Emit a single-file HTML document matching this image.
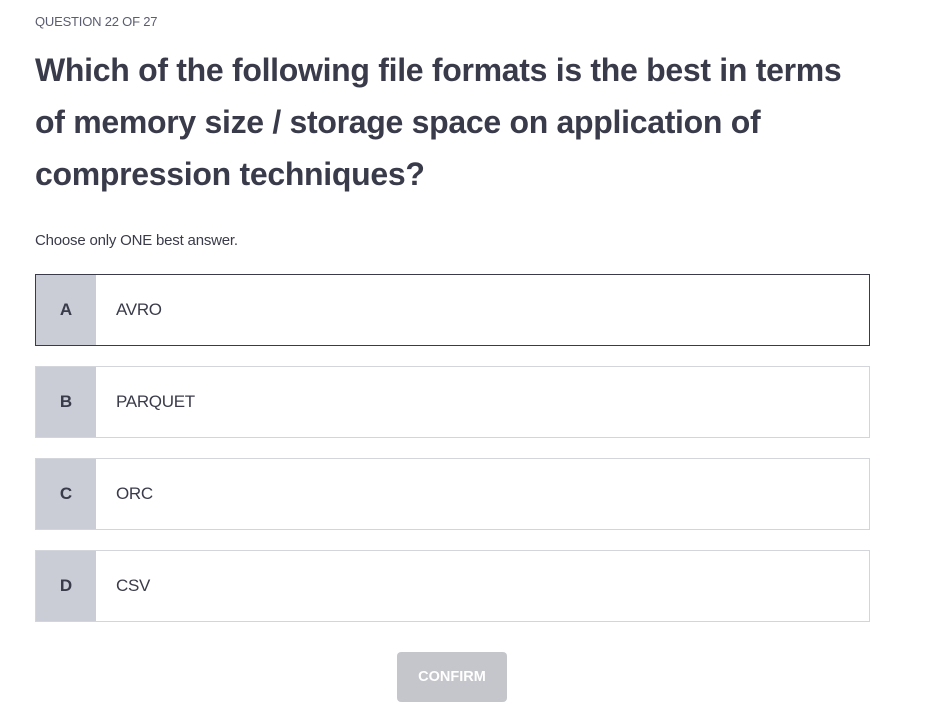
<!DOCTYPE html>
<html><head><style>
body{margin:0;background:#fff;font-family:"Liberation Sans",sans-serif;color:#3a3b4a;width:925px;height:717px;overflow:hidden;position:relative}
.q{position:absolute;left:35px;top:14px;font-size:13px;color:#5a5d70;letter-spacing:-0.2px}
h1{position:absolute;left:35px;top:44px;margin:0;width:880px;white-space:nowrap;font-size:32px;font-weight:bold;line-height:52px;color:#3a3b4a;letter-spacing:-0.3px}
.c{position:absolute;left:35px;top:232px;font-size:15px;color:#3a3b4a;letter-spacing:-0.2px}
.o{position:absolute;left:35px;width:833px;height:70px;border:1px solid #d3d5dc;display:flex;align-items:center;box-sizing:content-box}
.o .l{width:60px;height:100%;background:#cacdd6;display:flex;align-items:center;justify-content:center;font-weight:bold;font-size:17px;color:#3a3b4a}
.o .t{margin-left:20px;font-size:17px;color:#3a3b4a;letter-spacing:-0.3px}
.o.s{border-color:#3a3b4a}
.btn{position:absolute;left:397px;top:652px;width:110px;height:50px;background:#c5c6cb;border-radius:4px;color:#fff;font-weight:bold;font-size:14.5px;display:flex;align-items:center;justify-content:center}
</style></head><body>
<div class="q">QUESTION 22 OF 27</div>
<h1>Which of the following file formats is the best in terms<br>of memory size / storage space on application of<br>compression techniques?</h1>
<div class="c">Choose only ONE best answer.</div>
<div class="o s" style="top:274px"><div class="l">A</div><div class="t">AVRO</div></div>
<div class="o" style="top:366px"><div class="l">B</div><div class="t">PARQUET</div></div>
<div class="o" style="top:458px"><div class="l">C</div><div class="t">ORC</div></div>
<div class="o" style="top:550px"><div class="l">D</div><div class="t">CSV</div></div>
<div class="btn">CONFIRM</div>
</body></html>
